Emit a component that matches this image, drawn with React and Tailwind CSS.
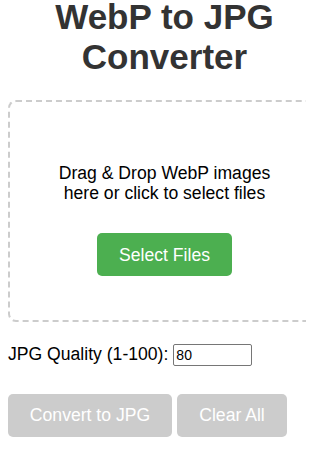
import React from "react";

export default function App() {
  return (
    <div className="w-[306px] h-[469px] overflow-hidden bg-white" style={{ fontFamily: '"Liberation Sans", Arial, sans-serif' }}>
      <div className="ml-[8px] w-[313px]">
        <h1 className="text-center text-[35px] font-bold text-[#333]">
          <span className="block leading-[34px]">WebP to JPG</span>
          <span className="block mt-[6px] leading-[34px]">Converter</span>
        </h1>
        <div className="mt-[26px] h-[222px] border-2 border-dashed border-[#ccc] rounded-[8px] flex flex-col items-center pt-[61px]">
          <p className="text-center text-[17.6px] leading-[20.24px] text-black">
            Drag &amp; Drop WebP images
            <br />
            here or click to select files
          </p>
          <button className="mt-[30px] w-[135px] h-[43px] rounded-[5px] bg-[#4caf50] text-white text-[17.6px] leading-[20.24px]">
            Select Files
          </button>
        </div>
        <div className="mt-[22px] flex items-baseline">
          <label className="text-[17.6px] leading-[20.24px] text-black">JPG Quality (1-100):</label>
          <input
            type="number"
            defaultValue="80"
            className="ml-[5px] w-[79px] h-[22px] border border-[#767676] rounded-[2px] px-[2px] text-[14px] text-black bg-white"
            style={{ MozAppearance: "textfield" }}
          />
        </div>
        <div className="mt-[28px] flex gap-[5px]">
          <button className="w-[164px] h-[43px] rounded-[5px] bg-[#cccccc] text-white text-[17.6px] leading-[20.24px]">
            Convert to JPG
          </button>
          <button className="w-[110px] h-[43px] rounded-[5px] bg-[#cccccc] text-white text-[17.6px] leading-[20.24px]">
            Clear All
          </button>
        </div>
      </div>
      <style>{`input[type=number]::-webkit-inner-spin-button,input[type=number]::-webkit-outer-spin-button{-webkit-appearance:none;margin:0}`}</style>
    </div>
  );
}
